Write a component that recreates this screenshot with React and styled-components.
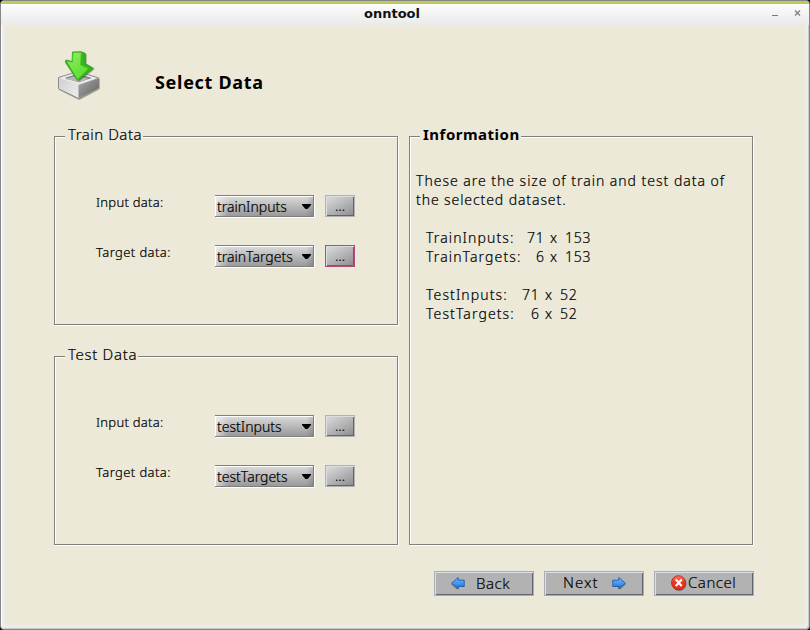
import React from "react";
import styled, { createGlobalStyle } from "styled-components";

const Global = createGlobalStyle`
  * { box-sizing: border-box; }
  body { margin: 0; background: #000; }
`;

const Window = styled.main`
  width: 810px;
  height: 630px;
  overflow: hidden;
  display: flex;
  flex-direction: column;
  border: 1px solid #858585;
  border-radius: 4px;
  background: #ececec;
  box-shadow: inset 1px 0 #fff, inset -1px -1px #c9c9cc;
  font-family: "Noto Sans", sans-serif;
  font-weight: 300;
  color: #000;
`;

const TitleBar = styled.header`
  height: 24px;
  flex: none;
  display: grid;
  grid-template-columns: 1fr auto 1fr;
  border-top: 3px solid #bdcc58;
  background: linear-gradient(#fcfcfc, #eaeaea);
`;

const WindowTitle = styled.h1`
  grid-column: 2;
  margin: 0;
  transform: translateX(-13px);
  font: bold 13px/19px "DejaVu Sans", sans-serif;
  color: #111;
`;

const WindowControls = styled.div`
  display: flex;
  justify-content: flex-end;
  gap: 16px;
  padding: 5px 8px 0 0;
  svg { width: 7px; height: 8px; }
`;

const Content = styled.section`
  width: 800px;
  height: 600px;
  flex: none;
  margin-left: 4px;
  padding: 0 50px 0 49px;
  background: #ece9d8;
`;

const PageHeader = styled.div`
  height: 111px;
  display: flex;
  padding: 23px 0 0 0;
`;

const PageTitle = styled.h2`
  margin: 20px 0 0 51px;
  font-size: 18px;
  line-height: 28px;
  letter-spacing: 0.7px;
`;

const Panels = styled.div`
  display: grid;
  grid-template-columns: 344px 344px;
  grid-template-rows: 189px 189px;
  column-gap: 11px;
  row-gap: 31px;
`;

const Panel = styled.section`
  grid-column: ${(p) => (p.$tall ? 2 : 1)};
  grid-row: ${(p) => (p.$tall ? "1 / 3" : "auto")};
  border: 1px solid #808080;
  box-shadow: 1px 1px #fff, inset 1px 1px #fff;
`;

const Legend = styled.h3`
  width: fit-content;
  height: 20px;
  margin: -13px 0 2px 10px;
  padding: 0 1px 0 3px;
  background: #ece9d8;
  font-size: 15px;
  line-height: 20px;
  white-space: nowrap;
  font-weight: ${(p) => (p.$bold ? 700 : 300)};
  -webkit-text-stroke: ${(p) => (p.$bold ? 0 : 0.2)}px;
  letter-spacing: ${(p) => p.$track}px;
`;

const Fields = styled.div`
  display: flex;
  flex-direction: column;
  gap: 28px;
  padding: 49px 0 0 41px;
  -webkit-text-stroke: 0.2px;
`;

const Field = styled.div`
  display: grid;
  grid-template-columns: 119px 99px 41px;
  height: 22px;
`;

const Label = styled.span`
  margin-top: -3px;
  font-size: 13px;
  line-height: 20px;
  letter-spacing: ${(p) => p.$track}px;
`;

const Select = styled.button`
  width: 99px;
  height: 22px;
  display: flex;
  align-items: center;
  justify-content: space-between;
  padding: 1px 2px 0 2px;
  border: solid #808080;
  border-width: 1px 1px 1px 0;
  box-shadow: 1px 1px #fff, inset 1px 1px #fff;
  background: linear-gradient(90deg, #fff9, #fff0 14%, #0000 93%, #0002), linear-gradient(#dcdcdc, #bababa 50%, #999);
  font: 300 14px/18px "Noto Sans", sans-serif;
  color: #000;
  letter-spacing: ${(p) => p.$track}px;
  svg { width: 9px; height: 5px; flex: none; margin-bottom: 1px; }
`;

const Browse = styled.button`
  width: 30px;
  height: 22px;
  margin-left: 11px;
  padding: 0;
  border: 1px solid ${(p) => (p.$active ? "#b84a76" : "#b2b2b2")};
  box-shadow: inset 1px 1px #dcdce4, inset -1px -1px #646470;
  background: linear-gradient(150deg, #ddd, #b6b6b6 50%, #8b8b8b);
  font: 300 14px/20px "Noto Sans", sans-serif;
  color: #000;
`;

const Info = styled.div`
  padding: 25px 0 0 6px;
  font-size: 14px;
  line-height: 19px;
  -webkit-text-stroke: 0.2px;
`;

const Line = styled.div`
  height: 19px;
  white-space: nowrap;
  letter-spacing: ${(p) => p.$track}px;
`;

const Sizes = styled.div`
  display: grid;
  grid-template-columns: ${(p) => p.$cols};
  height: 57px;
  padding: 19px 0 0 10px;
  letter-spacing: 0.8px;
  white-space: nowrap;
`;

const SizeName = styled.span`
  letter-spacing: 1.1px;
`;

const Count = styled.span`
  padding-left: ${(p) => (p.$short ? 9 : 0)}px;
`;

const Footer = styled.footer`
  display: flex;
  justify-content: flex-end;
  gap: 10px;
  padding: 26px 1px 0 0;
`;

const Action = styled.button`
  width: 100px;
  height: 25px;
  display: flex;
  align-items: center;
  padding: 0 0 0 ${(p) => p.$inset}px;
  gap: ${(p) => p.$gap}px;
  border: 1px solid #a9acb2;
  box-shadow: inset 1px 1px #dce0e9, inset -1px -1px #626674;
  background: #b2b2b2;
  font: 300 15px/20px "Noto Sans", sans-serif;
  letter-spacing: ${(p) => p.$track}px;
  -webkit-text-stroke: 0.15px;
  color: #000;
  svg { flex: none; -webkit-text-stroke: 0; }
`;

const ActionText = styled.span`
  margin-bottom: ${(p) => (p.$low ? 1 : 3)}px;
`;

function ImportIcon() {
  return (
    <svg width="50" height="56" viewBox="54 48 50 56">
      <defs>
        <linearGradient id="side" x1="0" y1="0" x2="1" y2="1">
          <stop offset="0" stopColor="#aaa" /><stop offset="1" stopColor="#606060" />
        </linearGradient>
        <linearGradient id="front" x1="0" y1="0" x2="1" y2="1">
          <stop offset="0" stopColor="#cfcfcf" /><stop offset="1" stopColor="#eee" />
        </linearGradient>
        <linearGradient id="leaf" x1="0" y1="0" x2="0.8" y2="1">
          <stop offset="0" stopColor="#91ee61" /><stop offset="1" stopColor="#5bdc2b" />
        </linearGradient>
        <filter id="soft" x="-20%" y="-20%" width="150%" height="150%">
          <feDropShadow dx="0.6" dy="0.8" stdDeviation="0.7" floodOpacity="0.45" />
        </filter>
      </defs>
      <g filter="url(#soft)" strokeLinejoin="round">
        <path d="M58.500 77.500 78 71.500l20.500 6.500v10L78.500 98.500 58.500 88.500Z" fill="#e3e3e3" stroke="#777" strokeWidth=".8" />
        <path d="M59 78 78.500 85v12.500L59 88.500Z" fill="url(#front)" />
        <path d="M78.500 85 98.500 78v10l-20 10Z" fill="url(#side)" />
        <path d="m62.500 78 15.500-5L94 78l-15.500 5Z" fill="#858585" stroke="#f7f7f7" strokeWidth="1.200" />
        <path d="m65 79 12-3.500 12.500 3.500L78 82Z" fill="#b6b6b6" />
      </g>
      <g filter="url(#soft)" strokeLinejoin="round">
        <path d="m72.500 52 9-.2 3.800 1.800v10l8 4.700L78.500 79.800 77 79.500 65.300 61.800l.8-1.800 6 1.600Z" fill="#36b51c" stroke="#219b12" strokeWidth=".8" />
        <path d="M73 52.500h8.200l-.6 12.500 7.800 3.500L77.500 79.500l-11-18.500 6 1.200Z" fill="url(#leaf)" stroke="#48c629" strokeWidth=".7" />
      </g>
    </svg>
  );
}

function ArrowIcon({ left }) {
  return (
    <svg width="15" height="14" viewBox="0 0 15 14">
      <defs>
        <linearGradient id="blueArrow" x1="0" y1="0" x2="0" y2="1">
          <stop offset="0" stopColor="#78b9ff" /><stop offset=".5" stopColor="#4298f4" /><stop offset="1" stopColor="#2265bd" />
        </linearGradient>
      </defs>
      <g transform={left ? "translate(15 0) scale(-1 1)" : undefined} strokeLinejoin="round">
        <path d="M1.500 4.500h6V1.500l6.500 5.800-6 5.500V10h-6.500Z" fill="#555" opacity=".5" />
        <path d="M.8 3.200h6V.5l6.500 5.700-6.500 5.800V9.500h-6Z" fill="url(#blueArrow)" stroke="#1d58a9" strokeWidth=".9" />
      </g>
    </svg>
  );
}

function CancelIcon() {
  return (
    <svg width="16" height="17" viewBox="0 0 16 17">
      <defs>
        <linearGradient id="redBall" x1="0" y1="0" x2="0" y2="1">
          <stop offset="0" stopColor="#ff765f" /><stop offset=".5" stopColor="#ed321d" /><stop offset="1" stopColor="#ef2c11" />
        </linearGradient>
      </defs>
      <circle cx="8.300" cy="9" r="7.200" fill="#555" opacity=".6" />
      <circle cx="7.500" cy="7.700" r="7" fill="url(#redBall)" stroke="#b31d12" strokeWidth=".8" />
      <path d="m5.500 5.200 4.500 5m0-5-4.500 5" stroke="#fff" strokeWidth="2.200" strokeLinecap="square" />
    </svg>
  );
}

function FieldRow({ label, value, labelTrack, track, active }) {
  return (
    <Field>
      <Label $track={labelTrack}>{label}</Label>
      <Select $track={track}>
        <span>{value}</span>
        <svg viewBox="0 0 9 5"><path d="M0 0h9v1L5.500 5h-2L0 1Z" /></svg>
      </Select>
      <Browse $active={active}>...</Browse>
    </Field>
  );
}

export default function App() {
  return (
    <>
      <Global />
      <Window>
        <TitleBar>
          <WindowTitle>onntool</WindowTitle>
          <WindowControls>
            <svg viewBox="0 0 7 8"><path d="M1 6.500h6" stroke="#777" /></svg>
            <svg viewBox="0 0 7 8"><path d="m1 1.500 5 5m0-5-5 5" stroke="#888" strokeWidth="1.500" /></svg>
          </WindowControls>
        </TitleBar>
        <Content>
          <PageHeader>
            <ImportIcon />
            <PageTitle>Select Data</PageTitle>
          </PageHeader>
          <Panels>
            <Panel>
              <Legend $track={0.5}>Train Data</Legend>
              <Fields>
                <FieldRow label="Input data:" value="trainInputs" labelTrack={0.28} track={0} />
                <FieldRow label="Target data:" value="trainTargets" labelTrack={0.4} track={0} active />
              </Fields>
            </Panel>
            <Panel $tall>
              <Legend $bold $track={0.5}>Information</Legend>
              <Info>
                <Line $track={0.97}>These are the size of train and test data of</Line>
                <Line $track={0.9}>the selected dataset.</Line>
                <Sizes $cols="101px 23px 15px 40px">
                  <SizeName>TrainInputs:</SizeName><Count>71</Count><span>x</span><span>153</span>
                  <SizeName>TrainTargets:</SizeName><Count $short>6</Count><span>x</span><span>153</span>
                </Sizes>
                <Sizes $cols="96px 23px 15px 40px">
                  <SizeName>TestInputs:</SizeName><Count>71</Count><span>x</span><span>52</span>
                  <SizeName>TestTargets:</SizeName><Count $short>6</Count><span>x</span><span>52</span>
                </Sizes>
              </Info>
            </Panel>
            <Panel>
              <Legend $track={0.67}>Test Data</Legend>
              <Fields>
                <FieldRow label="Input data:" value="testInputs" labelTrack={0.28} track={0} />
                <FieldRow label="Target data:" value="testTargets" labelTrack={0.4} track={0} />
              </Fields>
            </Panel>
          </Panels>
          <Footer>
            <Action $inset={15} $gap={11} $track={0.5}><ArrowIcon left /><ActionText $low>Back</ActionText></Action>
            <Action $inset={18} $gap={13} $track={1}><ActionText>Next</ActionText><ArrowIcon /></Action>
            <Action $inset={16} $gap={1} $track={0.5}><CancelIcon /><ActionText>Cancel</ActionText></Action>
          </Footer>
        </Content>
      </Window>
    </>
  );
}
